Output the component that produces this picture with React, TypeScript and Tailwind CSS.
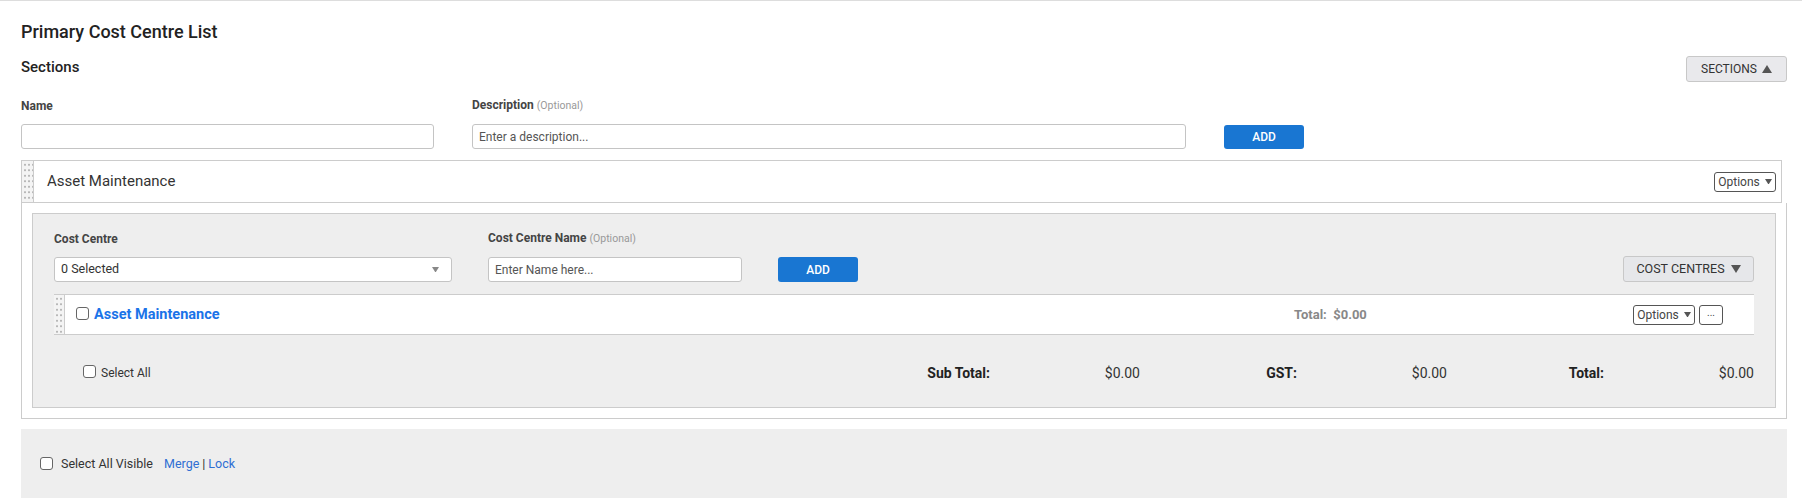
import React from "react";

const Check: React.FC = () => (
  <span className="inline-block h-[13px] w-[13px] shrink-0 rounded-[3px] border border-[#666] bg-white" />
);

const Caret: React.FC<{ up?: boolean; size?: number; color?: string }> = ({ up, size = 9, color = "#555" }) => (
  <svg width={size} height={size * 0.8} viewBox="0 0 10 8" className="inline-block">
    {up ? <polygon points="5,0 10,8 0,8" fill={color} /> : <polygon points="0,0 10,0 5,8" fill={color} />}
  </svg>
);

const Handle: React.FC<{ className?: string }> = ({ className }) => (
  <div
    className={
      "shrink-0 self-stretch border-r border-[#ccc] bg-[#f4f4f4] bg-[radial-gradient(circle,#b8b8b8_0.9px,transparent_1.1px)] bg-[length:4px_5.5px] bg-[position:1px_1px] " +
      (className ?? "")
    }
  />
);

const OptionsButton: React.FC = () => (
  <button className="flex h-[20px] w-[62px] items-center justify-center gap-[5px] rounded-[3px] border border-[#555] bg-white text-[12px] text-[#444]">
    Options
    <Caret size={7} color="#555" />
  </button>
);

const App: React.FC = () => {
  return (
    <div className="h-[498px] w-full overflow-hidden border-t border-[#ddd] bg-white pl-[21px] pr-[15px] font-['Roboto','Liberation_Sans',sans-serif] text-[#333]">
      <h1 className="mt-[19px] text-[18px] leading-[24px] font-medium text-[#222]">Primary Cost Centre List</h1>

      <div className="mt-[12px] flex h-[26px] items-start justify-between">
        <h2 className="mt-[1px] text-[15px] leading-[20px] font-medium text-[#222]">Sections</h2>
        <button className="flex h-[26px] w-[101px] items-center justify-center gap-[5px] rounded-[3px] border border-[#c8c8c8] bg-[#e9e9ec] text-[12px] text-[#333]">
          SECTIONS
          <Caret up size={10} color="#555" />
        </button>
      </div>

      <div className="mt-[15px] flex items-end">
        <div className="w-[413px]">
          <label className="block text-[12px] leading-[16px] font-bold text-[#444]">Name</label>
          <input className="mt-[10px] h-[25px] w-full rounded-[3px] border border-[#c4c4c4] bg-white px-[6px] text-[12px] outline-none" />
        </div>
        <div className="ml-[38px] w-[714px]">
          <label className="block text-[12px] leading-[16px] font-bold text-[#444]">
            Description <span className="text-[10.5px] font-normal text-[#999]">(Optional)</span>
          </label>
          <input
            placeholder="Enter a description..."
            className="mt-[10px] h-[25px] w-full rounded-[3px] border border-[#c4c4c4] bg-white px-[6px] text-[12px] outline-none placeholder:text-[#555]"
          />
        </div>
        <button className="ml-[38px] h-[24px] w-[80px] rounded-[3px] bg-[#1976d2] text-[12px] font-medium text-white">
          ADD
        </button>
      </div>

      <div className="mt-[11px]">
        <div className="flex h-[43px] w-[calc(100%-5px)] items-center border border-[#ccc] bg-white">
          <Handle className="w-[12px]" />
          <span className="ml-[13px] text-[15px] text-[#333]">Asset Maintenance</span>
          <div className="ml-auto mr-[5px]">
            <OptionsButton />
          </div>
        </div>

        <div className="border-x border-b border-[#ccc] px-[10px] pt-[10px] pb-[10px]">
          <div className="border border-[#ccc] bg-[#eeeeee] px-[21px] pt-[16px] pb-[24px]">
            <div className="flex items-end">
              <div className="w-[398px]">
                <label className="block text-[12px] leading-[16px] font-bold text-[#444]">Cost Centre</label>
                <div className="mt-[10px] flex h-[25px] w-full items-center justify-between rounded-[3px] border border-[#c4c4c4] bg-white pl-[6px] pr-[12px] text-[12.5px] text-[#333]">
                  <span>0 Selected</span>
                  <Caret size={7} color="#888" />
                </div>
              </div>
              <div className="ml-[36px] w-[254px]">
                <label className="block text-[12px] leading-[16px] font-bold text-[#444]">
                  Cost Centre Name <span className="text-[10.5px] font-normal text-[#999]">(Optional)</span>
                </label>
                <input
                  placeholder="Enter Name here..."
                  className="mt-[10px] h-[25px] w-full rounded-[3px] border border-[#c4c4c4] bg-white px-[6px] text-[12px] outline-none placeholder:text-[#555]"
                />
              </div>
              <button className="ml-[36px] h-[25px] w-[80px] rounded-[3px] bg-[#1976d2] text-[12px] font-medium text-white">
                ADD
              </button>
              <button className="ml-auto flex h-[26px] w-[131px] items-center justify-center gap-[6px] rounded-[3px] border border-[#c8c8c8] bg-[#e6e7ea] text-[12.5px] text-[#333]">
                COST CENTRES
                <Caret size={10} color="#555" />
              </button>
            </div>

            <div className="mt-[12px] flex h-[41px] items-center border-y border-[#ccc] bg-white">
              <Handle className="w-[11px]" />
              <div className="flex w-[1229px] items-center">
                <span className="ml-[11px]">
                  <Check />
                </span>
                <a className="ml-[5px] text-[14.5px] font-bold text-[#1a73e8]">Asset Maintenance</a>
              </div>
              <span className="text-[13px] font-bold text-[#888]">Total:&nbsp; $0.00</span>
              <div className="ml-auto mr-[31px] flex items-center gap-[4px]">
                <OptionsButton />
                <button className="flex h-[20px] w-[24px] items-center justify-center rounded-[3px] border border-[#555] bg-white pb-[4px] text-[10px] text-[#444]">
                  ...
                </button>
              </div>
            </div>

            <div className="mt-[28px] flex h-[20px] items-center">
              <span className="ml-[29px]">
                <Check />
              </span>
              <span className="ml-[5px] text-[12px] text-[#333]">Select All</span>
              <div className="ml-auto flex">
                {[
                  ["Sub Total:", "$0.00"],
                  ["GST:", "$0.00"],
                  ["Total:", "$0.00"],
                ].map(([label, value]) => (
                  <div key={label} className="flex w-[307px] items-center text-[14px]">
                    <span className="w-[157px] text-right font-bold text-[#222]">{label}</span>
                    <span className="w-[150px] text-right text-[#333]">{value}</span>
                  </div>
                ))}
              </div>
            </div>
          </div>
        </div>
      </div>

      <div className="mt-[10px] flex h-[80px] items-start bg-[#eeeeee] pt-[26px] pl-[19px] text-[12.5px]">
        <span className="mt-[2px]">
          <Check />
        </span>
        <span className="ml-[8px] text-[#333]">Select All Visible</span>
        <span className="ml-[11px] text-[#2f6fd3]">Merge</span>
        <span className="mx-[3px] text-[#333]">|</span>
        <span className="text-[#2f6fd3]">Lock</span>
      </div>
    </div>
  );
};

export default App;
